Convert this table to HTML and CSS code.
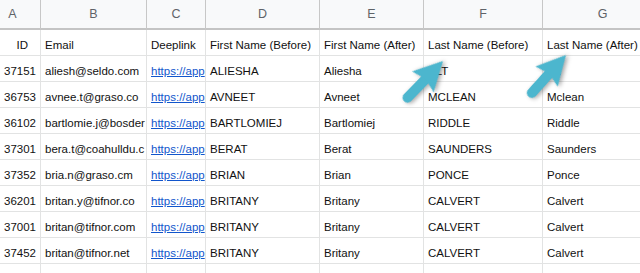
FILE: index.html
```html
<!DOCTYPE html>
<html lang="en">
<head>
<meta charset="UTF-8">
<title>Name cleanup</title>
<link rel="stylesheet" href="styles.css">
</head>
<body>
  <div class="sheet">
    <div class="row head">
      <div class="col">A</div>
      <div class="col">B</div>
      <div class="col">C</div>
      <div class="col">D</div>
      <div class="col">E</div>
      <div class="col">F</div>
      <div class="col">G</div>
    </div>
    <div class="row">
      <div class="cell num id-title">ID</div>
      <div class="cell">Email</div>
      <div class="cell">Deeplink</div>
      <div class="cell">First Name (Before)</div>
      <div class="cell">First Name (After)</div>
      <div class="cell">Last Name (Before)</div>
      <div class="cell">Last Name (After)</div>
    </div>
    <div class="row">
      <div class="cell num">37151</div>
      <div class="cell">aliesh@seldo.com</div>
      <div class="cell"><a href="#">https://app</a></div>
      <div class="cell">ALIESHA</div>
      <div class="cell">Aliesha</div>
      <div class="cell">ALT</div>
      <div class="cell">Alt</div>
    </div>
    <div class="row">
      <div class="cell num">36753</div>
      <div class="cell">avnee.t@graso.co</div>
      <div class="cell"><a href="#">https://app</a></div>
      <div class="cell">AVNEET</div>
      <div class="cell">Avneet</div>
      <div class="cell">MCLEAN</div>
      <div class="cell">Mclean</div>
    </div>
    <div class="row">
      <div class="cell num">36102</div>
      <div class="cell">bartlomie.j@bosder</div>
      <div class="cell"><a href="#">https://app</a></div>
      <div class="cell">BARTLOMIEJ</div>
      <div class="cell">Bartlomiej</div>
      <div class="cell">RIDDLE</div>
      <div class="cell">Riddle</div>
    </div>
    <div class="row">
      <div class="cell num">37301</div>
      <div class="cell">bera.t@coahulldu.c</div>
      <div class="cell"><a href="#">https://app</a></div>
      <div class="cell">BERAT</div>
      <div class="cell">Berat</div>
      <div class="cell">SAUNDERS</div>
      <div class="cell">Saunders</div>
    </div>
    <div class="row">
      <div class="cell num">37352</div>
      <div class="cell">bria.n@graso.cm</div>
      <div class="cell"><a href="#">https://app</a></div>
      <div class="cell">BRIAN</div>
      <div class="cell">Brian</div>
      <div class="cell">PONCE</div>
      <div class="cell">Ponce</div>
    </div>
    <div class="row">
      <div class="cell num">36201</div>
      <div class="cell">britan.y@tifnor.co</div>
      <div class="cell"><a href="#">https://app</a></div>
      <div class="cell">BRITANY</div>
      <div class="cell">Britany</div>
      <div class="cell">CALVERT</div>
      <div class="cell">Calvert</div>
    </div>
    <div class="row">
      <div class="cell num">37001</div>
      <div class="cell">britan@tifnor.com</div>
      <div class="cell"><a href="#">https://app</a></div>
      <div class="cell">BRITANY</div>
      <div class="cell">Britany</div>
      <div class="cell">CALVERT</div>
      <div class="cell">Calvert</div>
    </div>
    <div class="row">
      <div class="cell num">37452</div>
      <div class="cell">britan@tifnor.net</div>
      <div class="cell"><a href="#">https://app</a></div>
      <div class="cell">BRITANY</div>
      <div class="cell">Britany</div>
      <div class="cell">CALVERT</div>
      <div class="cell">Calvert</div>
    </div>
    <div class="row last">
      <div class="cell"></div>
      <div class="cell"></div>
      <div class="cell"></div>
      <div class="cell"></div>
      <div class="cell"></div>
      <div class="cell"></div>
      <div class="cell"></div>
    </div>
  </div>

  <!-- callout arrows pointing at the last name columns -->
  <svg class="arrows" width="640" height="273" viewBox="0 0 640 273">
    <g class="arrow" transform="translate(443 61) rotate(-46)">
      <line x1="-51" y1="0" x2="-20" y2="0" />
      <polygon points="0,0 -29,-15 -25,0 -29,15" />
    </g>
    <g class="arrow" transform="translate(566 55) rotate(-48)">
      <line x1="-51" y1="0" x2="-20" y2="0" />
      <polygon points="0,0 -29,-15 -25,0 -29,15" />
    </g>
  </svg>
</body>
</html>
```

FILE: styles.css
```css
body {
  margin: 0;
  overflow: hidden;
  height: 273px;
  background-color: #fff;
  font-family: "Liberation Sans", Arial, sans-serif;
  color: #111;
}

/* spreadsheet grid, column A is partly scrolled off to the left */
.sheet {
  width: 678px;
  margin-left: -15px;
}

.row {
  display: grid;
  grid-template-columns: 56px 106px 59px 114px 104px 119px 120px;
  height: 26px;
}

.row.head {
  height: 30px;
  background-color: #f8f9fa;
}

.row.last {
  height: 10px;
  overflow: hidden;
}

.col {
  border-right: 1px solid #c7c7c7;
  border-bottom: 2px solid #c4c4c4;
  text-align: center;
  font-size: 12.5px;
  line-height: 28px;
  color: #5f6368;
}

.cell {
  box-sizing: border-box;
  height: 26px;
  padding: 8px 4px 3px 4px;
  border-right: 1px solid #e2e3e3;
  border-bottom: 1px solid #e2e3e3;
  font-size: 11.5px;
  line-height: 14px;
  white-space: nowrap;
  overflow: hidden;
}

.cell.num {
  text-align: right;
}

.cell.id-title {
  padding-right: 12px;
}

.cell a {
  color: #1155cc;
  text-decoration: underline;
}

.arrows {
  position: absolute;
  left: 0;
  top: 0;
  pointer-events: none;
}

.arrow {
  filter: drop-shadow(1px 2px 2px rgba(0, 0, 0, 0.35));
}

.arrow line {
  stroke: #4cb6ce;
  stroke-width: 10;
  stroke-linecap: round;
}

.arrow polygon {
  fill: #4cb6ce;
}
```
